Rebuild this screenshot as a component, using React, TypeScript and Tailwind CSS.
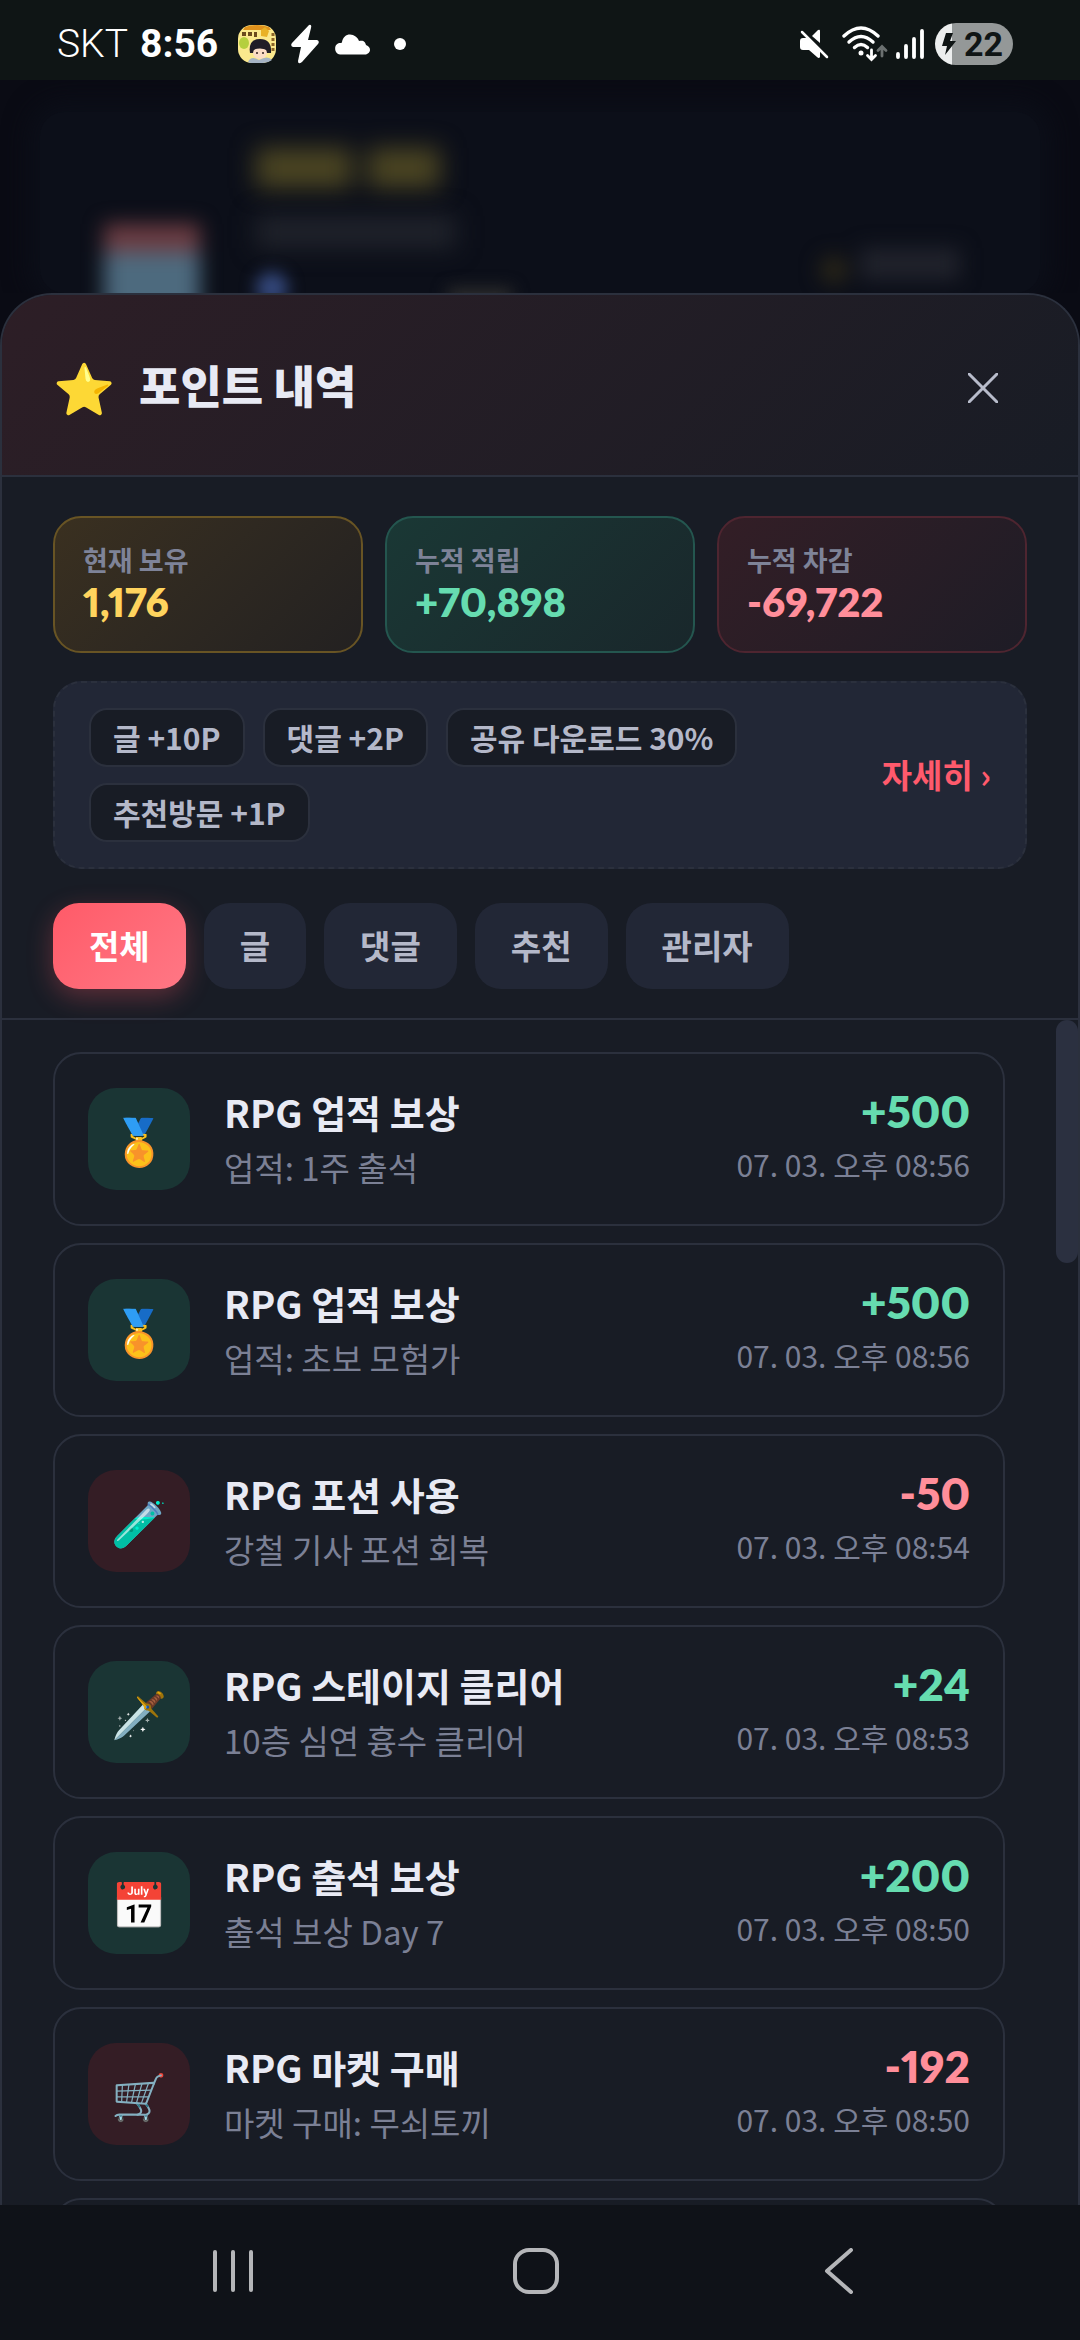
import { useState } from "react";
import clsx from "clsx";

type Tone = "gold" | "green" | "red";

interface PointLog {
  id: number;
  icon: string;
  title: string;
  detail: string;
  amount: number;
  date: string;
}

const stats: { label: string; value: string; tone: Tone }[] = [
  { label: "현재 보유", value: "1,176", tone: "gold" },
  { label: "누적 적립", value: "+70,898", tone: "green" },
  { label: "누적 차감", value: "-69,722", tone: "red" },
];

const toneCard: Record<Tone, string> = {
  gold: "border-[#685424] from-[#3a3020] to-[#232121]",
  green: "border-[#24564f] from-[#1a3835] to-[#19272b]",
  red: "border-[#4e2530] from-[#331e26] to-[#1e1c26]",
};

const toneText: Record<Tone, string> = {
  gold: "text-[#ffd45e]",
  green: "text-[#66dcb0]",
  red: "text-[#ff8e9a]",
};

const rules = ["글 +10P", "댓글 +2P", "공유 다운로드 30%", "추천방문 +1P"];

const tabs = ["전체", "글", "댓글", "추천", "관리자"];

const logs: PointLog[] = [
  { id: 1, icon: "🏅", title: "RPG 업적 보상", detail: "업적: 1주 출석", amount: 500, date: "07. 03. 오후 08:56" },
  { id: 2, icon: "🏅", title: "RPG 업적 보상", detail: "업적: 초보 모험가", amount: 500, date: "07. 03. 오후 08:56" },
  { id: 3, icon: "🧪", title: "RPG 포션 사용", detail: "강철 기사 포션 회복", amount: -50, date: "07. 03. 오후 08:54" },
  { id: 4, icon: "🗡️", title: "RPG 스테이지 클리어", detail: "10층 심연 흉수 클리어", amount: 24, date: "07. 03. 오후 08:53" },
  { id: 5, icon: "📅", title: "RPG 출석 보상", detail: "출석 보상 Day 7", amount: 200, date: "07. 03. 오후 08:50" },
  { id: 6, icon: "🛒", title: "RPG 마켓 구매", detail: "마켓 구매: 무쇠토끼", amount: -192, date: "07. 03. 오후 08:50" },
];

export default function App() {
  const [activeTab, setActiveTab] = useState("전체");

  return (
    <div className="flex h-screen flex-col overflow-hidden bg-[#0a0b14] font-['Noto_Sans_CJK_KR',sans-serif] text-[#e8eaf4]">
      <StatusBar />
      <Backdrop />

      <main className="relative z-10 flex min-h-0 flex-1 flex-col overflow-hidden rounded-t-[52px] border-2 border-b-0 border-[#2b303d] bg-[#181c25]">
        <header className="flex items-center justify-between border-b-2 border-[#2b303d] bg-linear-135 from-[#2d1e26] to-[#181c25] px-[51px] py-11">
          <h1 className="flex items-center gap-[22px] text-[45px] leading-[92px] font-black">
            <span className="w-16 text-[50px]">⭐</span>
            포인트 내역
          </h1>
          <button type="button" aria-label="닫기" className="-mr-0.5 flex size-[92px] items-center justify-center pt-1.5 text-[#b8bccb]">
            <svg viewBox="0 0 30 30" className="size-[30px]" fill="none" stroke="currentColor" strokeWidth="3" strokeLinecap="round">
              <path d="M1 1l28 28M29 1L1 29" />
            </svg>
          </button>
        </header>

        <section className="flex flex-col border-b-2 border-[#2b303d] px-[51px] pt-[39px] pb-[29px]">
          <div className="grid grid-cols-3 gap-[22px]">
            {stats.map((stat) => (
              <div
                key={stat.label}
                className={clsx("rounded-[28px] border-2 bg-linear-135 px-7 pt-[22px] pb-[26px]", toneCard[stat.tone])}
              >
                <p className="text-[27px] leading-10 font-bold text-[#7e8398]">{stat.label}</p>
                <p className={clsx("font-[Lato,sans-serif] text-[40px] leading-[45px] font-extrabold proportional-nums", toneText[stat.tone])}>
                  {stat.value}
                </p>
              </div>
            ))}
          </div>

          <div className="mt-7 flex items-center justify-between gap-9 rounded-[28px] border-2 border-dashed border-[#2b303d] bg-[#222736] px-[34px] py-[25px]">
            <ul className="flex flex-1 flex-wrap gap-x-[18px] gap-y-4">
              {rules.map((rule) => (
                <li
                  key={rule}
                  className="rounded-[18px] border-2 border-[#2b303d] bg-[#181c25] px-[22px] text-[30px] leading-[55px] font-bold text-[#b4b8c9]"
                >
                  {rule}
                </li>
              ))}
            </ul>
            <a href="#rules" className="text-[33px] font-bold text-[#ff5a6c]">
              자세히 ›
            </a>
          </div>

          <nav className="mt-[34px] flex gap-[18px]">
            {tabs.map((tab) => (
              <button
                key={tab}
                type="button"
                onClick={() => setActiveTab(tab)}
                className={clsx(
                  "h-[86px] rounded-[26px] px-9 text-[33px] font-bold",
                  tab === activeTab
                    ? "bg-linear-135 from-[#ff5a68] to-[#ff7785] text-white shadow-[0_8px_26px_rgba(255,90,104,0.3)]"
                    : "bg-[#222736] text-[#b4b8c9]"
                )}
              >
                {tab}
              </button>
            ))}
          </nav>
        </section>

        <div className="flex min-h-0 flex-1">
          <ul className="flex min-w-0 flex-1 flex-col gap-[17px] overflow-hidden px-[51px] pt-8">
            {logs.map((log) => (
              <LogRow key={log.id} log={log} />
            ))}
            <li className="h-[174px] shrink-0 rounded-[28px] border-2 border-[#2b303d]" />
          </ul>
          <div className="h-[243px] w-[22px] rounded-full bg-[#2b3040]" />
        </div>
      </main>

      <NavigationBar />
    </div>
  );
}

function LogRow({ log }: { log: PointLog }) {
  const isGain = log.amount > 0;

  return (
    <li className="flex shrink-0 items-center gap-[34px] rounded-[28px] border-2 border-[#2b303d] px-[33px] py-[30px]">
      <span
        className={clsx(
          "flex size-[102px] shrink-0 items-center justify-center rounded-[28px] text-[45px]",
          isGain ? "bg-[#1a3534]" : "bg-[#341d25]"
        )}
      >
        {log.icon}
      </span>
      <div className="min-w-0 flex-1">
        <p className="truncate text-[38px] leading-[56px] font-bold">{log.title}</p>
        <p className="truncate text-[33px] leading-[54px] text-[#7b8095]">{log.detail}</p>
      </div>
      <div className="self-start text-right">
        <p
          className={clsx(
            "font-[Lato,sans-serif] text-[44px] leading-[54px] font-extrabold proportional-nums",
            isGain ? "text-[#66dcb0]" : "text-[#ff8e9a]"
          )}
        >
          {isGain ? `+${log.amount}` : log.amount}
        </p>
        <p className="text-[30px] leading-[52px] text-[#7b8095]">{log.date}</p>
      </div>
    </li>
  );
}

// Dimmed, blurred page behind the sheet
function Backdrop() {
  return (
    <div aria-hidden="true" className="h-[213px] shrink-0 overflow-hidden px-10 pt-8">
      <div className="flex h-full items-start rounded-3xl bg-[#0c0f19] pl-16 shadow-[0_0_24px_12px_#0c0f19]">
        <div className="mt-28 w-24 blur-[10px]">
          <div className="h-7 bg-[#6b3c42]" />
          <div className="h-20 bg-[#4d6a7e]" />
        </div>
        <div className="ml-14 flex-1">
          <div className="mt-9 flex gap-4 blur-[12px]">
            <div className="h-10 w-24 bg-[#4b4522]" />
            <div className="h-10 w-[72px] bg-[#4b4522]" />
          </div>
          <div className="mt-7 h-8 w-[200px] bg-[#20232b] blur-[12px]" />
          <div className="mt-6 flex items-start gap-40 blur-[8px]">
            <div className="size-8 rounded-full bg-[#34487c]" />
            <div className="mt-4 h-8 w-16 bg-[#2c2c2c]" />
          </div>
        </div>
        <div className="mt-[132px] mr-20 flex items-center gap-3 blur-[10px]">
          <div className="mt-3 size-7 rounded-full bg-[#2a2618]" />
          <div className="h-8 w-[100px] bg-[#20222b]" />
        </div>
      </div>
    </div>
  );
}

function StatusBar() {
  return (
    <div className="flex h-20 shrink-0 items-center justify-between bg-[#0f1515] px-[57px] pt-2 pr-[67px] font-[Roboto,sans-serif] text-white">
      <div className="flex items-center">
        <span className="text-[39px] font-light">SKT</span>
        <span className="ml-3 text-[39px] font-bold">8:56</span>
        <AppBadge />
        <svg viewBox="0 0 28 40" className="ml-[14px] h-10 w-7" fill="white">
          <path d="M18 1q3-1 2 3l-3 12h9q3 1 1 4L11 38q-4 3-4-1l3-14H2q-3-1-1-4z" />
        </svg>
        <svg viewBox="0 0 36 21" className="ml-[15px] h-[21px] w-9" fill="white">
          <path d="M6 20.500a6 6 0 0 1-1-11.500c2 0 3 0 3-1C9 3 12 .5 16 .5s8 3 9 6.500c5-1 6 1 7 4 3 1 4 3 4 5s-2 4.500-5 4.500z" />
        </svg>
        <span className="ml-6 size-3 rounded-full bg-white" />
      </div>

      <div className="flex items-center">
        <svg viewBox="0 0 30 30" className="size-[30px]" fill="white">
          <path d="M1 12q0-3 3-3h4l13 13v6q-1 2-3 0l-8-7H4q-3 0-3-3z" />
          <path d="M13 7l6-6q2-1 2 1v12z" />
          <path d="M3 3l25 25" stroke="white" strokeWidth="2.500" strokeLinecap="round" />
        </svg>
        <svg viewBox="0 0 46 36" className="ml-[13px] h-9 w-[46px]" fill="none" stroke="white" strokeWidth="3.400" strokeLinecap="round">
          <path d="M2 10q17-16 34 0" />
          <path d="M7 16q12-11 24 0" />
          <path d="M12.500 21.500q6.500-6 13 0" />
          <circle cx="19" cy="27" r="2.500" fill="white" stroke="none" />
          <path d="M29.500 24v9M25.500 29.500l4 4 4-4" strokeWidth="2.800" />
          <path d="M40 30v-9M36 24.500l4-4 4 4" stroke="#6b7070" strokeWidth="2.800" />
        </svg>
        <svg viewBox="0 0 28 30" className="ml-2 h-[30px] w-7" stroke="white" strokeWidth="3.800" strokeLinecap="round">
          <path d="M2 25v3M10 17v11M18 10v18M26 2v26" />
        </svg>
        <div className="ml-[11px] flex h-[42px] w-[78px] items-center justify-end gap-2 rounded-full bg-linear-to-r from-[#eceeee] from-22% to-[#949898] to-22% pr-[10px] text-[#0f1515]">
          <svg viewBox="0 0 14 22" className="h-[22px] w-[14px]" fill="currentColor">
            <path d="M4 0h7L8 8h6L3 22l2-9H0z" />
          </svg>
          <span className="text-[34px] leading-[42px] font-bold">22</span>
        </div>
      </div>
    </div>
  );
}

function AppBadge() {
  return (
    <svg viewBox="0 0 40 40" className="ml-[19px] size-10">
      <rect x="1" y="1" width="38" height="38" rx="14" fill="#fbe98d" />
      <path d="M8 3q12-4 24 0l2 3H6z" fill="#e0921c" />
      <path d="M5 8h4v4H5zM11 8h4v4h-4zM17 8h3v5h-3z" fill="#6b4a1c" />
      <path d="M24 6l4-3 4 4-2 6-6-1z" fill="#e9b226" />
      <ellipse cx="7" cy="19" rx="5" ry="6" fill="#b5cf3e" />
      <path d="M36 9v20" stroke="#8a6428" strokeWidth="3" strokeDasharray="3 2" />
      <path d="M13 29q-2-14 10-14t11 14z" fill="#201c26" />
      <ellipse cx="23" cy="29" rx="7" ry="6" fill="#fbdcc6" />
      <path d="M16 26q7-3 14 0l-1-4H17z" fill="#201c26" />
      <circle cx="20" cy="29" r="1" fill="#33221f" />
      <circle cx="26" cy="29" r="1" fill="#33221f" />
      <path d="M11 38q3-7 11-2 9-5 13 0-4 3-9 3H14z" fill="#a5b3c4" />
    </svg>
  );
}

function NavigationBar() {
  return (
    <nav className="relative z-10 grid h-[135px] shrink-0 grid-cols-[1fr_202px_1fr] bg-[#0f1218] pb-1 text-[#b5b6b9]">
      <button type="button" aria-label="최근 앱" className="flex items-center justify-end pr-[185px]">
        <svg viewBox="0 0 42 44" className="h-11 w-[42px]" stroke="currentColor" strokeWidth="4" strokeLinecap="round">
          <path d="M3 3v38M21 3v38M39 3v38" />
        </svg>
      </button>
      <button type="button" aria-label="홈" className="flex items-center justify-center pr-2">
        <svg viewBox="0 0 46 46" className="size-[46px]" fill="none" stroke="currentColor" strokeWidth="4">
          <rect x="2" y="2" width="42" height="42" rx="14" />
        </svg>
      </button>
      <button type="button" aria-label="뒤로" className="flex items-center pl-[182px]">
        <svg viewBox="0 0 32 46" className="h-[46px] w-8" fill="none" stroke="currentColor" strokeWidth="4" strokeLinecap="round" strokeLinejoin="round">
          <path d="M28 2L4 23l24 21" />
        </svg>
      </button>
    </nav>
  );
}
